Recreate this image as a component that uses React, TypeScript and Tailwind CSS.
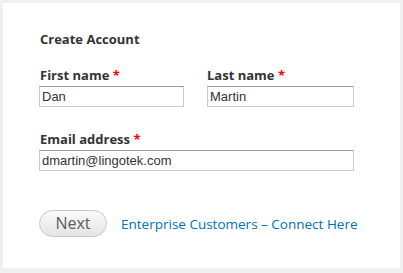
import React from "react";

export default function App() {
  const label = "text-[13px] font-bold text-[#333] leading-[16px] mb-[3px]";
  const input =
    "h-[21px] border border-[#ccc] border-t-[#999] bg-white px-[2px] text-[13px] text-[#333] leading-[19px] outline-none";
  const inputFont = { fontFamily: '"Liberation Sans", Arial, sans-serif' };
  return (
    <div className="w-[403px] h-[273px] bg-[#f0f0f0] p-[3px]">
      <div className="bg-white h-[265px] w-[397px] pl-[36px] pt-[27px]" style={{ fontFamily: '"Open Sans", sans-serif' }}>
        <div className="text-[13px] font-bold text-[#333] leading-[18px] pl-[1px]">Create Account</div>
        <div className="flex gap-[23px] mt-[19px]">
          <div className="flex flex-col w-[145px]">
            <div className={label + " pl-[1px]"}>
              First name <span className="text-[#f00]">*</span>
            </div>
            <input readOnly value="Dan" className={input} style={inputFont} />
          </div>
          <div className="flex flex-col w-[147px]">
            <div className={label}>
              Last name <span className="text-[#f00]">*</span>
            </div>
            <input readOnly value="Martin" className={input} style={inputFont} />
          </div>
        </div>
        <div className="flex flex-col w-[315px] mt-[24px]">
          <div className={label + " pl-[1px]"}>
            Email address <span className="text-[#f00]">*</span>
          </div>
          <input readOnly value="dmartin@lingotek.com" className={input} style={inputFont} />
        </div>
        <div className="flex items-center mt-[39px]">
          <button className="w-[68px] h-[27px] rounded-[14px] border border-[#c8c8c8] bg-gradient-to-b from-[#fafafa] to-[#e4e4e4] text-[16px] text-[#5a5a5a] leading-[25px] pb-[1px]">
            Next
          </button>
          <a className="ml-[14px] text-[13.5px] text-[#0071b3] leading-[18px]">
            Enterprise Customers – Connect Here
          </a>
        </div>
      </div>
    </div>
  );
}
